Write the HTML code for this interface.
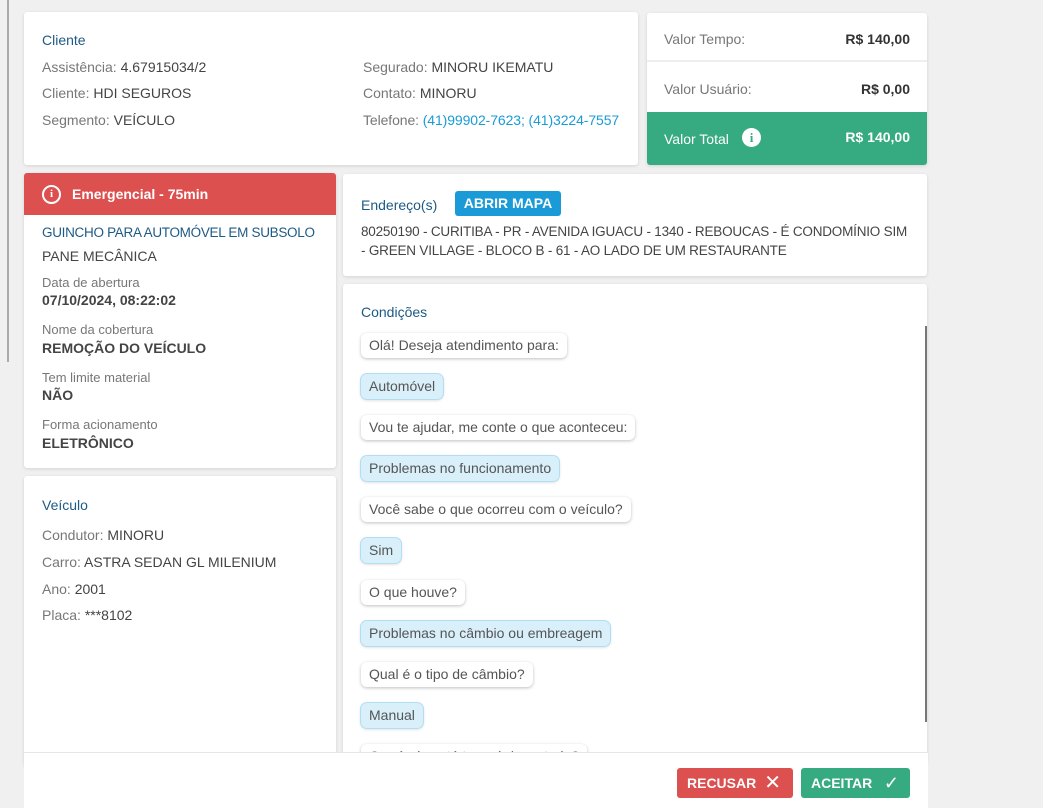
<!DOCTYPE html>
<html><head><meta charset="utf-8"><style>
*{box-sizing:border-box;margin:0;padding:0}
body{width:1043px;height:808px;background:#f0f0f0;font-family:"Liberation Sans",sans-serif;font-size:14px;color:#555;position:relative;overflow:hidden;letter-spacing:0}
.card{position:absolute;background:#fff;border-radius:3px;box-shadow:0 1px 3px rgba(0,0,0,.12)}
.t{color:#1d5a85;font-size:14px}
.g{color:#777}
.d{color:#444}
.row{position:absolute;white-space:nowrap}
.b{position:absolute;left:18px;height:25px;line-height:25px;padding:0 8px;border-radius:6px;background:#fff;box-shadow:0 1px 3px rgba(0,0,0,.25);color:#555;white-space:nowrap;font-size:14px}
.b.u{background:#d9f0fa;box-shadow:0 0 0 1px #b3def2,0 1px 3px rgba(0,0,0,.2)}
.lbl{font-size:13px;color:#777}
.val{font-weight:bold;color:#444;font-size:14px}
</style></head><body>
<div style="position:absolute;left:7px;top:0;width:2px;height:362px;background:#aaa"></div>

<div class="card" style="left:24px;top:12px;width:614px;height:153px">
  <div class="row t" style="left:18px;top:20px">Cliente</div>
  <div class="row" style="left:18px;top:47px"><span class="g">Assistência:</span> <span class="d">4.67915034/2</span></div>
  <div class="row" style="left:18px;top:73px"><span class="g">Cliente:</span> <span class="d">HDI SEGUROS</span></div>
  <div class="row" style="left:18px;top:100px"><span class="g">Segmento:</span> <span class="d">VEÍCULO</span></div>
  <div class="row" style="left:339px;top:47px"><span class="g">Segurado:</span> <span class="d">MINORU IKEMATU</span></div>
  <div class="row" style="left:339px;top:73px"><span class="g">Contato:</span> <span class="d">MINORU</span></div>
  <div class="row" style="left:339px;top:100px;letter-spacing:-0.1px"><span class="g">Telefone:</span> <span style="color:#1a9bd7">(41)99902-7623; (41)3224-7557</span></div>
</div>

<div class="card" style="left:647px;top:13px;width:280px;height:152px;overflow:hidden">
  <div class="row g" style="left:17px;top:18px">Valor Tempo:</div>
  <div class="row" style="right:17px;top:18px;font-weight:bold;color:#333">R$ 140,00</div>
  <div style="position:absolute;left:0;top:47px;width:100%;height:2px;background:#eee"></div>
  <div class="row g" style="left:17px;top:68px">Valor Usuário:</div>
  <div class="row" style="right:17px;top:68px;font-weight:bold;color:#333">R$ 0,00</div>
  <div style="position:absolute;left:0;top:99px;width:100%;height:53px;background:#36aa80">
    <div class="row" style="left:17px;top:19px;color:#fff">Valor Total</div>
    <div style="position:absolute;left:95px;top:16px;width:19px;height:19px;border-radius:50%;background:#fff;color:#36aa80;font-weight:bold;font-size:13px;text-align:center;line-height:19px;font-family:'Liberation Serif',serif">i</div>
    <div class="row" style="right:17px;top:17px;color:#fff;font-weight:bold">R$ 140,00</div>
  </div>
</div>

<div class="card" style="left:24px;top:173px;width:312px;height:295px;overflow:hidden">
  <div style="height:42px;background:#dc5050;color:#fff;font-weight:bold;position:relative">
    <div style="position:absolute;left:18px;top:12px;width:19px;height:19px;border:2px solid #fff;border-radius:50%;text-align:center;font-size:11px;line-height:15px;font-family:'Liberation Serif',serif">i</div>
    <div class="row" style="left:48px;top:13px;font-size:14px">Emergencial - 75min</div>
  </div>
  <div class="row t" style="left:18px;top:52px;font-size:13.5px;letter-spacing:-0.3px">GUINCHO PARA AUTOMÓVEL EM SUBSOLO</div>
  <div class="row d" style="left:18px;top:75px">PANE MECÂNICA</div>
  <div class="row lbl" style="left:18px;top:102px">Data de abertura</div>
  <div class="row val" style="left:18px;top:119px">07/10/2024, 08:22:02</div>
  <div class="row lbl" style="left:18px;top:149px">Nome da cobertura</div>
  <div class="row val" style="left:18px;top:167px">REMOÇÃO DO VEÍCULO</div>
  <div class="row lbl" style="left:18px;top:197px">Tem limite material</div>
  <div class="row val" style="left:18px;top:214px">NÃO</div>
  <div class="row lbl" style="left:18px;top:244px">Forma acionamento</div>
  <div class="row val" style="left:18px;top:262px">ELETRÔNICO</div>
</div>

<div class="card" style="left:24px;top:476px;width:312px;height:290px">
  <div class="row t" style="left:18px;top:21px">Veículo</div>
  <div class="row" style="left:18px;top:51px"><span class="g">Condutor:</span> <span class="d">MINORU</span></div>
  <div class="row" style="left:18px;top:78px"><span class="g">Carro:</span> <span class="d">ASTRA SEDAN GL MILENIUM</span></div>
  <div class="row" style="left:18px;top:105px"><span class="g">Ano:</span> <span class="d">2001</span></div>
  <div class="row" style="left:18px;top:131px"><span class="g">Placa:</span> <span class="d">***8102</span></div>
</div>

<div class="card" style="left:343px;top:174px;width:584px;height:102px">
  <div class="row t" style="left:18px;top:23px">Endereço(s)</div>
  <div style="position:absolute;left:112px;top:17px;width:106px;height:25px;background:#1a9bd7;border-radius:3px;color:#fff;font-weight:bold;text-align:center;line-height:25px;font-size:14px">ABRIR MAPA</div>
  <div class="row d" style="left:18px;top:48px;line-height:19px;font-size:13.5px;letter-spacing:-0.2px">80250190 - CURITIBA - PR - AVENIDA IGUACU - 1340 - REBOUCAS - É CONDOMÍNIO SIM<br>- GREEN VILLAGE - BLOCO B - 61 - AO LADO DE UM RESTAURANTE</div>
</div>

<div class="card" style="left:343px;top:284px;width:584px;height:480px;overflow:hidden">
  <div class="row t" style="left:18px;top:20px">Condições</div>
  <div style="position:absolute;left:582px;top:42px;width:2px;height:396px;background:#777"></div>
  <div class="b" style="top:49px">Olá! Deseja atendimento para:</div>
  <div class="b u" style="top:90px">Automóvel</div>
  <div class="b" style="top:131px">Vou te ajudar, me conte o que aconteceu:</div>
  <div class="b u" style="top:172px">Problemas no funcionamento</div>
  <div class="b" style="top:213px">Você sabe o que ocorreu com o veículo?</div>
  <div class="b u" style="top:254px">Sim</div>
  <div class="b" style="top:296px">O que houve?</div>
  <div class="b u" style="top:337px">Problemas no câmbio ou embreagem</div>
  <div class="b" style="top:378px">Qual é o tipo de câmbio?</div>
  <div class="b u" style="top:419px">Manual</div>
  <div class="b" style="top:460px">O veículo está travado/engatado?</div>
</div>

<div style="position:absolute;left:24px;top:752px;width:904px;height:56px;background:#fff;border-top:1px solid #e6e6e6">
  <div style="position:absolute;left:653px;top:15px;width:116px;height:30px;background:#dc5050;border-radius:3px;color:#fff;font-weight:bold;line-height:30px;padding-left:10px">RECUSAR <span style="position:absolute;right:12px;top:0;font-weight:normal;font-size:20px">✕</span></div>
  <div style="position:absolute;left:777px;top:15px;width:109px;height:30px;background:#36aa80;border-radius:3px;color:#fff;font-weight:bold;line-height:30px;padding-left:10px">ACEITAR <span style="position:absolute;right:11px;top:0;font-weight:normal;font-size:18px">✓</span></div>
</div>
</body></html>
